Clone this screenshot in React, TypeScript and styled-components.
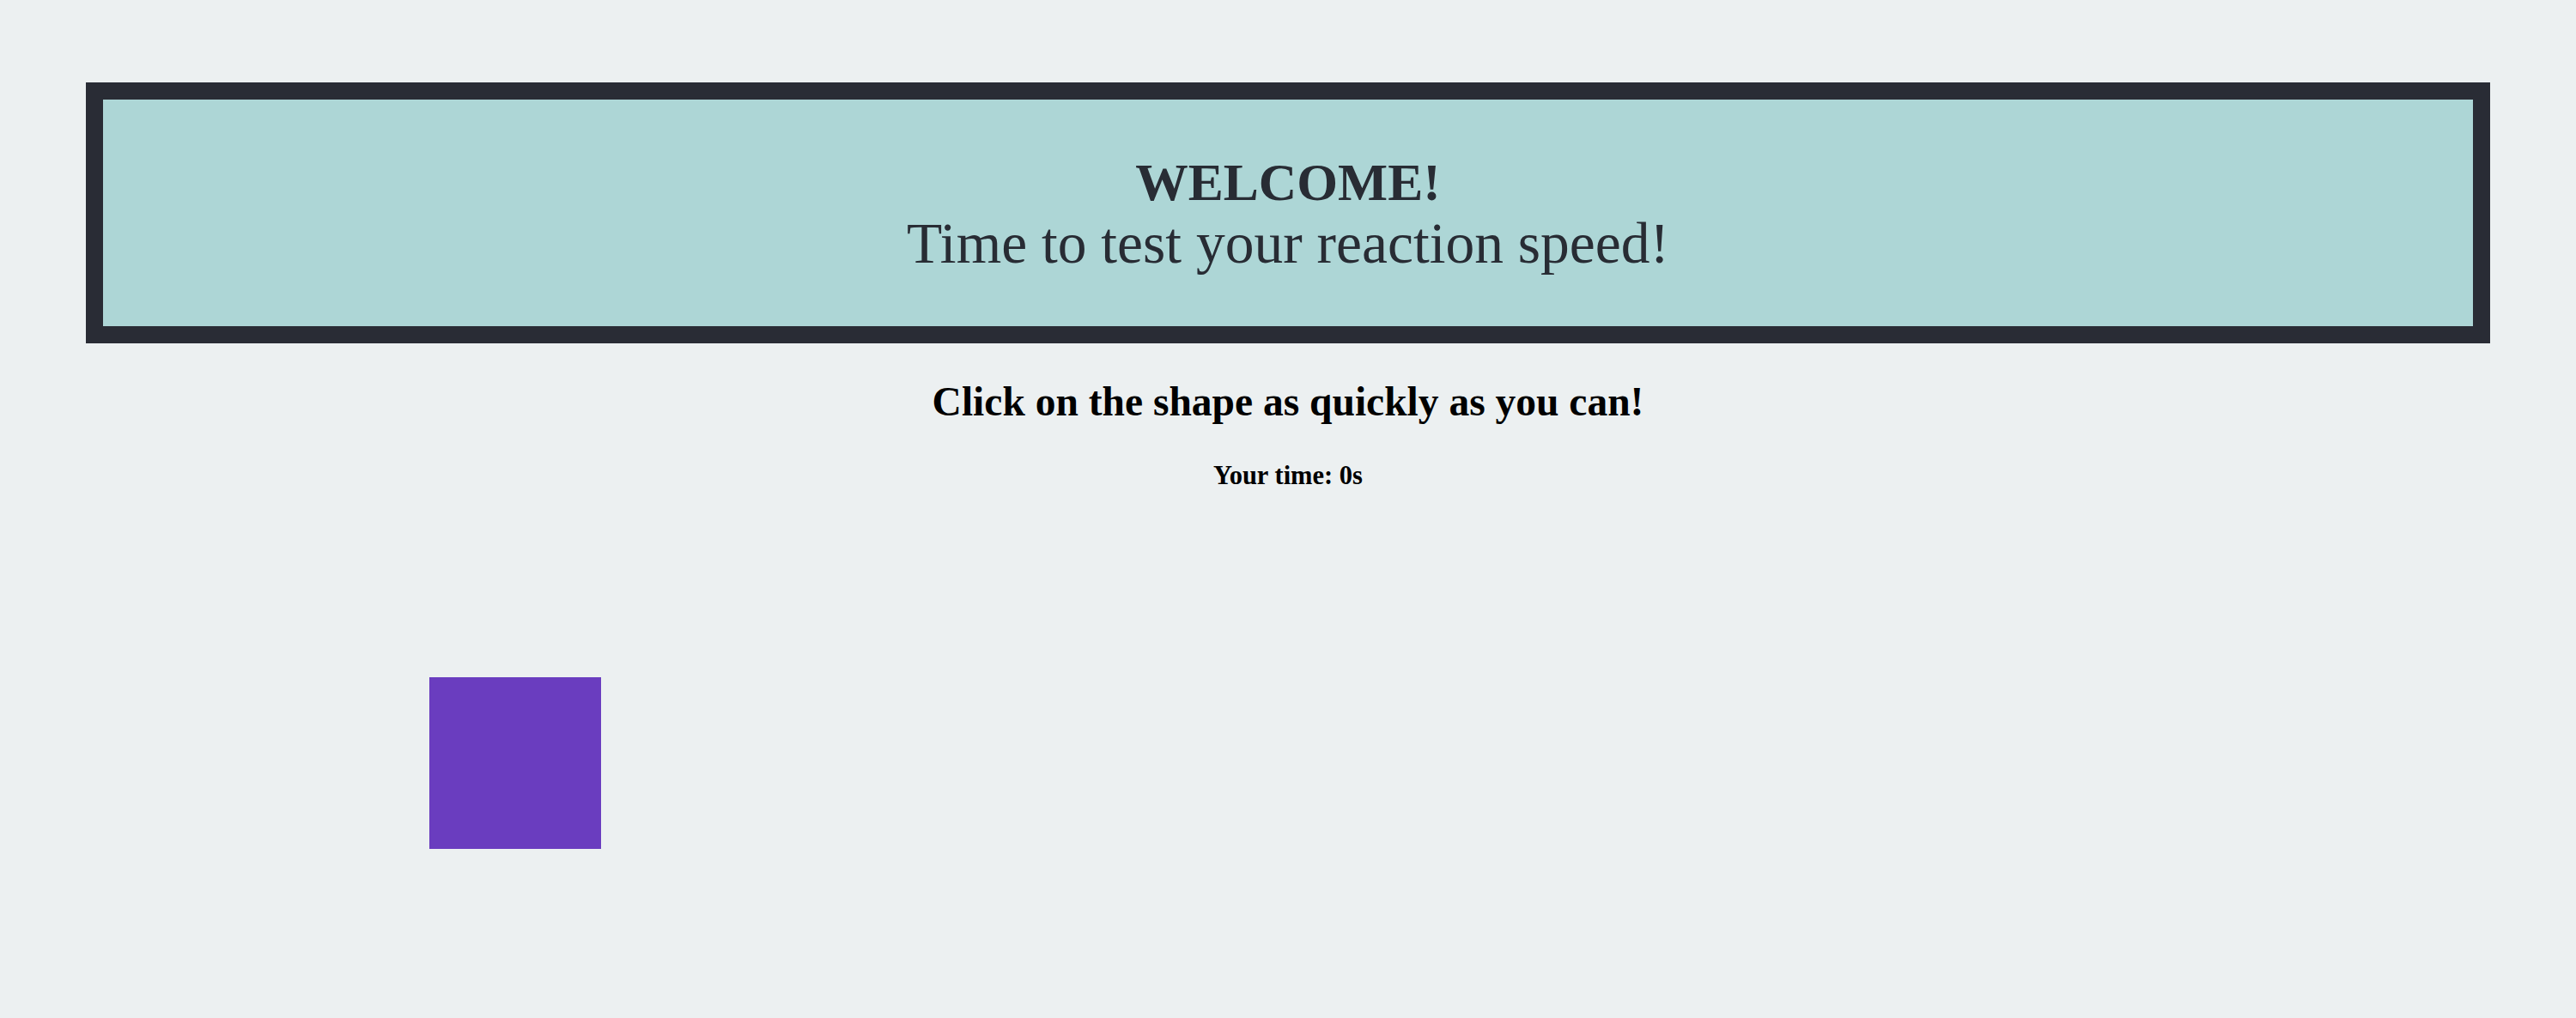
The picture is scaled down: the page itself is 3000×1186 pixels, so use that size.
import React from "react";
import styled, { createGlobalStyle } from "styled-components";

const GlobalStyle = createGlobalStyle`
  html, body {
    margin: 0;
    padding: 0;
    background: #ecf0f1;
  }
  body {
    font-family: "Liberation Serif", "Times New Roman", serif;
  }
`;

const Page = styled.div`
  min-height: 1186px;
  box-sizing: border-box;
  padding: 96px 100px 0;
  background: #ecf0f1;
`;

const Banner = styled.header`
  border: 20px solid #292c35;
  background: #add6d6;
  padding: 61px 0;
  text-align: center;
  color: #282c34;
`;

const BannerLine = styled.div<{ $bold?: boolean; $size: number }>`
  font-size: ${(p) => p.$size}px;
  line-height: 71px;
  font-weight: ${(p) => (p.$bold ? 700 : 400)};
`;

const Instruction = styled.h2`
  margin: 38px 0 0;
  font-size: 47.5px;
  line-height: 60px;
  font-weight: 700;
  text-align: center;
  color: #000;
`;

const TimeLabel = styled.p`
  margin: 36px 0 0;
  font-size: 30.5px;
  line-height: 40px;
  font-weight: 700;
  text-align: center;
  color: #000;
`;

const GameArea = styled.div`
  position: relative;
  height: 560px;
`;

const Shape = styled.div`
  position: absolute;
  width: 200px;
  height: 200px;
  background: #6a3dbf;
  cursor: pointer;
`;

export default function App() {
  const shapePos = { left: 400, top: 215 };
  return (
    <>
      <GlobalStyle />
      <Page>
        <Banner>
          <BannerLine $bold $size={61.5}>WELCOME!</BannerLine>
          <BannerLine $size={67.5}>Time to test your reaction speed!</BannerLine>
        </Banner>
        <Instruction>Click on the shape as quickly as you can!</Instruction>
        <TimeLabel>Your time: 0s</TimeLabel>
        <GameArea>
          <Shape style={{ left: shapePos.left, top: shapePos.top }} />
        </GameArea>
      </Page>
    </>
  );
}
